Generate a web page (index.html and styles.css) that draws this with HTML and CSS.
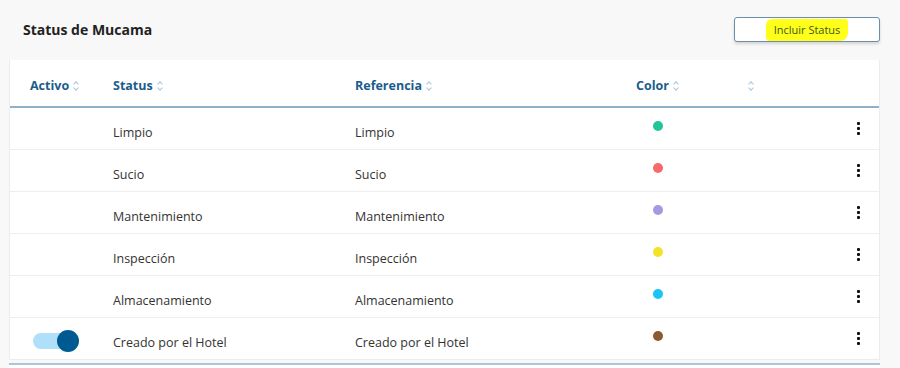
FILE: index.html
```html
<!DOCTYPE html>
<html lang="es">

<head>
    <meta charset="UTF-8">
    <meta name="viewport" content="width=device-width, initial-scale=1.0">
    <title>Status de Mucama</title>
    <link rel="stylesheet" href="styles.css">
</head>

<body>
    <div class="encabezado">
        <h1>Status de Mucama</h1>
        <button class="btn-incluir"><span class="marcador">Incluir Status</span></button>
    </div>

    <div class="tarjeta">
        <table>
            <thead>
                <tr>
                    <th class="col-activo">Activo <span class="orden"></span></th>
                    <th class="col-status">Status <span class="orden"></span></th>
                    <th class="col-ref">Referencia <span class="orden"></span></th>
                    <th class="col-color">Color <span class="orden"></span></th>
                    <th class="col-extra"><span class="orden"></span></th>
                    <th class="col-menu"></th>
                </tr>
            </thead>
            <tbody>
                <tr>
                    <td></td>
                    <td>Limpio</td>
                    <td>Limpio</td>
                    <td><span class="punto verde"></span></td>
                    <td></td>
                    <td class="menu"><span class="kebab"><i></i><i></i><i></i></span></td>
                </tr>
                <tr>
                    <td></td>
                    <td>Sucio</td>
                    <td>Sucio</td>
                    <td><span class="punto rojo"></span></td>
                    <td></td>
                    <td class="menu"><span class="kebab"><i></i><i></i><i></i></span></td>
                </tr>
                <tr>
                    <td></td>
                    <td>Mantenimiento</td>
                    <td>Mantenimiento</td>
                    <td><span class="punto lila"></span></td>
                    <td></td>
                    <td class="menu"><span class="kebab"><i></i><i></i><i></i></span></td>
                </tr>
                <tr>
                    <td></td>
                    <td>Inspección</td>
                    <td>Inspección</td>
                    <td><span class="punto amarillo"></span></td>
                    <td></td>
                    <td class="menu"><span class="kebab"><i></i><i></i><i></i></span></td>
                </tr>
                <tr>
                    <td></td>
                    <td>Almacenamiento</td>
                    <td>Almacenamiento</td>
                    <td><span class="punto celeste"></span></td>
                    <td></td>
                    <td class="menu"><span class="kebab"><i></i><i></i><i></i></span></td>
                </tr>
                <tr>
                    <td><span class="switch"><span class="perilla"></span></span></td>
                    <td>Creado por el Hotel</td>
                    <td>Creado por el Hotel</td>
                    <td><span class="punto marron"></span></td>
                    <td></td>
                    <td class="menu"><span class="kebab"><i></i><i></i><i></i></span></td>
                </tr>
            </tbody>
        </table>
    </div>
    <div class="pie"></div>
</body>

</html>
```

FILE: styles.css
```css
* {
    margin: 0;
    padding: 0;
    box-sizing: border-box;
}

body {
    font-family: "Open Sans", "Noto Sans", sans-serif;
    background-color: #f8f8f8;
    color: #333;
    width: 900px;
    height: 368px;
    overflow: hidden;
}

.encabezado {
    display: flex;
    justify-content: space-between;
    align-items: center;
    height: 60px;
    padding: 0 20px 0 23px;
}

h1 {
    font-size: 14px;
    font-weight: 700;
    color: #222;
    margin-top: -1px;
}

.btn-incluir {
    width: 146px;
    height: 25px;
    margin-top: -1px;
    background: #fff;
    border: 1px solid #6b8fab;
    border-radius: 3px;
    box-shadow: 0 2px 3px rgba(0, 0, 0, 0.15);
    font-family: inherit;
    font-size: 11px;
    color: #3a5a1c;
    cursor: pointer;
}

.marcador {
    background: #ffff1a;
    padding: 3px 8px 4px 8px;
    border-radius: 6px 3px 8px 4px;
}

.tarjeta {
    margin: 0 20px 0 9px;
    background: #fff;
    border-right: 1px solid #ececec;
    border-left: 1px solid #ececec;
    border-bottom: 1px solid #ececec;
}

table {
    width: 100%;
    border-collapse: collapse;
}

th {
    height: 47px;
    text-align: left;
    font-size: 12.5px;
    font-weight: 700;
    color: #1a5c8c;
    border-bottom: 2px solid #8fb0c6;
    padding-top: 5px;
    white-space: nowrap;
}

td {
    height: 42px;
    font-size: 12.5px;
    color: #333;
    border-bottom: 1px solid #eeeeee;
    padding-top: 8px;
}

tbody tr:last-child td {
    border-bottom: none;
}

.col-activo {
    width: 103px;
    padding-left: 20px;
}

.col-status {
    width: 242px;
}

.col-ref {
    width: 281px;
}

.col-color {
    width: 111px;
}

.col-extra {
    width: 100px;
}

.orden {
    display: inline-block;
    position: relative;
    width: 6px;
    height: 10px;
    margin-left: 1px;
    vertical-align: -1px;
}

.orden::before,
.orden::after {
    content: "";
    position: absolute;
    left: 1px;
    width: 3px;
    height: 3px;
    border-left: 1px solid #a7c6dc;
    border-top: 1px solid #a7c6dc;
}

.orden::before {
    top: 1px;
    transform: rotate(45deg);
}

.orden::after {
    bottom: 1px;
    transform: rotate(-135deg);
}

.punto {
    display: block;
    width: 10px;
    height: 10px;
    border-radius: 50%;
    margin-left: 17px;
    margin-top: -11px;
}

.verde { background: #22c49a; }
.rojo { background: #f66a6b; }
.lila { background: #a898e2; }
.amarillo { background: #f4e22a; }
.celeste { background: #1cc4f6; }
.marron { background: #8b5a2f; }

.menu {
    padding-left: 2px;
}

.kebab {
    display: flex;
    flex-direction: column;
    gap: 2px;
    width: 3px;
    margin-left: 8px;
    margin-top: -7px;
}

.kebab i {
    display: block;
    width: 3px;
    height: 3px;
    background: #111;
    border-radius: 1px;
}

.switch {
    display: block;
    position: relative;
    width: 37px;
    height: 16px;
    margin-left: 23px;
    margin-top: -3px;
    background: #b0e0f9;
    border-radius: 8px;
}

.perilla {
    position: absolute;
    right: -9px;
    top: -3px;
    width: 22px;
    height: 22px;
    border-radius: 50%;
    background: #005a92;
}

.pie {
    margin: 3px 20px 0 9px;
    border-top: 2px solid #a9c5d9;
    height: 10px;
    background: #fff;
}
```
